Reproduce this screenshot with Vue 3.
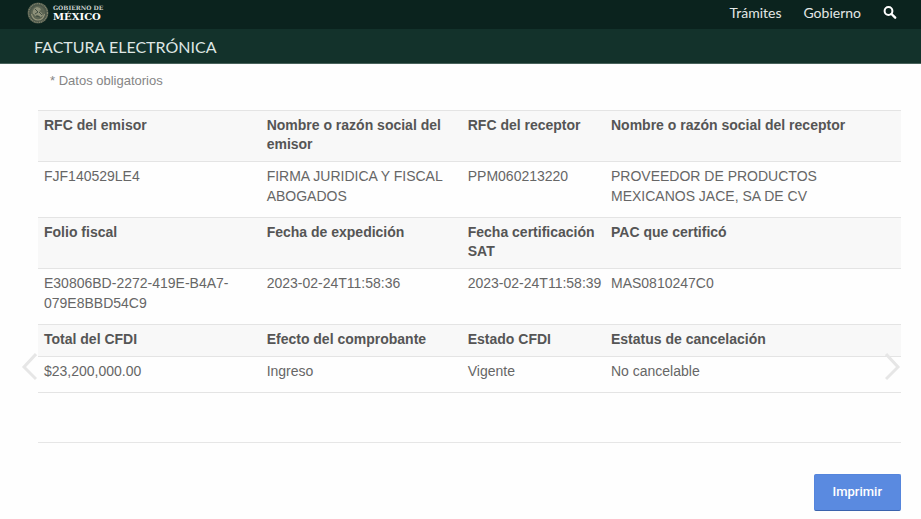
<template>
  <div class="page">
    <header>
      <div class="top-bar">
        <a href="#" class="brand" aria-label="Gobierno de México">
          <svg class="seal" viewBox="0 0 22 22" aria-hidden="true">
            <circle cx="11" cy="11" r="10.5" fill="#4c574a" />
            <circle cx="11" cy="11" r="9.4" fill="none" stroke="#85876f" stroke-width="1.2" stroke-dasharray="1 .8" />
            <circle cx="11" cy="11" r="7.2" fill="#5b6453" />
            <path d="M6 12c-1-3 1-6 4-7l3 1 1 2-2 1 3 2 1 3-3 1-2-2-3 1-1-2z" fill="#8d9079" />
            <path d="M8 7l3 3-3 2M12 10l3 3M9 14l4 1" fill="none" stroke="#3a473d" stroke-width=".9" />
            <path d="M4.5 12c1 4 4 6 6.500 6s5.500-2 6.500-6" fill="none" stroke="#96967c" stroke-width="1.1" />
          </svg>
          <span class="brand-text">
            <span class="brand-small">GOBIERNO DE</span>
            <span class="brand-big">MÉXICO</span>
          </span>
        </a>
        <nav class="main-nav">
          <a href="#">Trámites</a>
          <a href="#">Gobierno</a>
          <a href="#" class="search" aria-label="Buscar">
            <svg viewBox="0 0 14 14" aria-hidden="true">
              <circle cx="5.500" cy="5" r="3.900" fill="none" stroke="#fff" stroke-width="2" />
              <path d="M8.500 8l3.700 3.700" stroke="#fff" stroke-width="2.400" stroke-linecap="round" />
            </svg>
          </a>
        </nav>
      </div>
      <div class="sub-bar">
        <h1>FACTURA ELECTRÓNICA</h1>
      </div>
    </header>

    <main>
      <p class="required">* Datos obligatorios</p>

      <table>
        <colgroup>
          <col class="col-a">
          <col class="col-b">
          <col class="col-c">
          <col>
        </colgroup>
        <tbody v-for="(group, g) in groups" :key="g">
          <tr>
            <th v-for="label in group.labels" :key="label" scope="col">{{ label }}</th>
          </tr>
          <tr>
            <td v-for="value in group.values" :key="value">{{ value }}</td>
          </tr>
        </tbody>
      </table>

      <hr>

      <div class="actions">
        <button class="print-btn" type="button" @click="printPage">Imprimir</button>
      </div>
    </main>

    <!-- Slide arrows -->
    <button class="arrow prev" type="button" aria-label="Anterior">
      <svg viewBox="0 0 16 28"><path d="M15 1L3 14l12 12" /></svg>
    </button>
    <button class="arrow next" type="button" aria-label="Siguiente">
      <svg viewBox="0 0 16 28"><path d="M1 1l12 13L1 26" /></svg>
    </button>
  </div>
</template>

<script setup>
const groups = [
  {
    labels: ['RFC del emisor', 'Nombre o razón social del emisor', 'RFC del receptor', 'Nombre o razón social del receptor'],
    values: ['FJF140529LE4', 'FIRMA JURIDICA Y FISCAL ABOGADOS', 'PPM060213220', 'PROVEEDOR DE PRODUCTOS MEXICANOS JACE, SA DE CV']
  },
  {
    labels: ['Folio fiscal', 'Fecha de expedición', 'Fecha certificación SAT', 'PAC que certificó'],
    values: ['E30806BD-2272-419E-B4A7-079E8BBD54C9', '2023-02-24T11:58:36', '2023-02-24T11:58:39', 'MAS0810247C0']
  },
  {
    labels: ['Total del CFDI', 'Efecto del comprobante', 'Estado CFDI', 'Estatus de cancelación'],
    values: ['$23,200,000.00', 'Ingreso', 'Vigente', 'No cancelable']
  }
]

const printPage = () => {
  window.print()
}
</script>

<style>
body {
  margin: 0;
  background: #fefefe;
}
</style>

<style scoped>
.page {
  position: relative;
  font-family: "Liberation Sans", Arial, sans-serif;
  font-size: 14px;
  line-height: 19px;
  color: #666;
}

.top-bar {
  display: flex;
  justify-content: space-between;
  align-items: center;
  height: 29px;
  padding: 0 24px 4px 27px;
  box-sizing: border-box;
  background: #0b231e;
}

.brand {
  display: flex;
  align-items: center;
  gap: 4px;
  color: #fff;
  text-decoration: none;
}

.seal {
  width: 22px;
  height: 22px;
}

.brand-text {
  display: flex;
  flex-direction: column;
  font-family: "DejaVu Serif", serif;
  font-weight: 700;
}

.brand-small {
  font-size: 6px;
  line-height: 7px;
  color: #c9cfcc;
}

.brand-big {
  font-size: 10px;
  line-height: 11px;
}

.main-nav {
  display: flex;
  align-items: center;
  gap: 22px;
}

.main-nav a {
  font-family: Lato, sans-serif;
  font-size: 14px;
  color: #e3e8e6;
  text-decoration: none;
}

.search {
  display: flex;
}

.search svg {
  width: 14px;
  height: 14px;
}

.sub-bar {
  display: flex;
  align-items: center;
  height: 35px;
  padding: 0 34px;
  box-sizing: border-box;
  background: #13322b;
  border-bottom: 1px solid #48625b;
}

h1 {
  margin: 0;
  font-family: Lato, sans-serif;
  font-size: 16px;
  font-weight: 400;
  color: #dfe6e4;
}

main {
  padding: 7px 20px 9px 38px;
}

.required {
  margin: 0 0 20px;
  padding-left: 12px;
  font-size: 13px;
  color: #858585;
}

table {
  width: 100%;
  table-layout: fixed;
  border-collapse: separate;
  border-spacing: 0;
  border-bottom: 1px solid #e4e4e4;
}

.col-a {
  width: 25.8%;
}

.col-b {
  width: 23.3%;
}

.col-c {
  width: 16.6%;
}

th,
td {
  padding: 4px 2px 11px 6px;
  border-top: 1px solid #e4e4e4;
  text-align: left;
  vertical-align: top;
  line-height: 20px;
}

th {
  padding-top: 5px;
  padding-bottom: 7px;
  background: #f8f8f8;
  color: #555;
  font-weight: 700;
  line-height: 19px;
}

hr {
  margin: 49px 0 31px;
  border: none;
  border-top: 1px solid #e6e6e6;
}

.actions {
  display: flex;
  justify-content: flex-end;
}

.print-btn {
  padding: 7px 18px 9px;
  border: 1px solid #5585dc;
  border-bottom-color: #3b63ad;
  border-radius: 2px;
  background: #5a8ae0;
  color: #fff;
  font-family: Roboto, sans-serif;
  font-size: 13px;
  font-weight: 500;
  line-height: 19px;
  cursor: pointer;
}

.arrow {
  position: absolute;
  top: 353px;
  padding: 0;
  border: none;
  background: none;
  cursor: pointer;
}

.arrow svg {
  display: block;
  width: 16px;
  height: 28px;
  fill: none;
  stroke: #e6e6e6;
  stroke-width: 3;
}

.prev {
  left: 21px;
}

.next {
  right: 20px;
}
</style>
